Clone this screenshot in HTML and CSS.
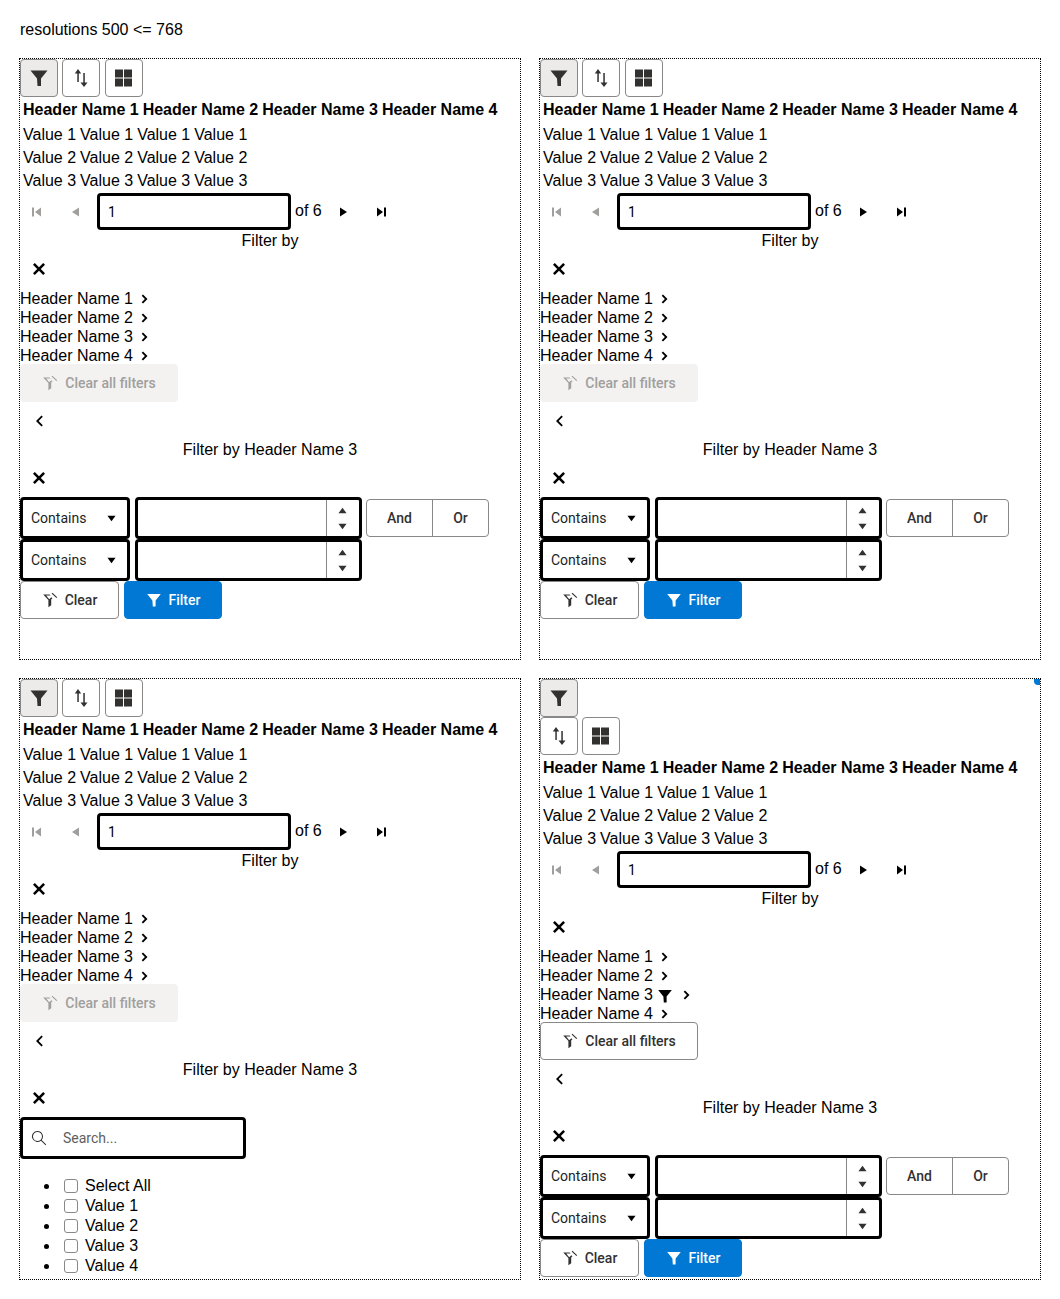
FILE: index.html
```html
<!DOCTYPE html>
<html lang="en">
<head>
    <meta charset="UTF-8">
    <meta name="viewport" content="width=device-width, initial-scale=1.0">
    <title>resolutions 500 &lt;= 768</title>
    <link rel="stylesheet" href="styles.css">
</head>
<body>
    <!-- shared icons -->
    <svg class="icon-defs" width="0" height="0">
        <symbol id="i-filter" viewBox="0 0 20 20"><path d="M1.500 2.500h17L12 10.500V18H8.500l-.5-7.500z"/></symbol>
        <symbol id="i-sort" viewBox="0 0 20 20"><path d="M7 1l3.200 4.500H7.800V14H6.300V5.500H3.800zM12.300 5h1.500v9.500h2.700L13 19l-3.500-4.500h2.800z"/></symbol>
        <symbol id="i-grid" viewBox="0 0 20 20"><path d="M1 1.500h8v8H1zM10 1.500h8v8h-8zM1 10.500h8v8H1zM10 10.500h8v8h-8z"/></symbol>
        <symbol id="i-clear" viewBox="0 0 20 20"><path d="M1.500 3h8l1.200 1.500H5.200L9 9l2.800-2.500L13 7.700 11.500 9.500v7L8 19v-9zM12 2l1-1 6 5.500-1 1z"/></symbol>
        <symbol id="i-close" viewBox="0 0 16 16"><path d="M3.800 2L8 6.200 12.200 2 14 3.800 9.800 8l4.200 4.200-1.800 1.800L8 9.800 3.800 14 2 12.200 6.200 8 2 3.800z"/></symbol>
        <symbol id="i-right" viewBox="0 0 16 16"><path d="M6 3.500l4.500 4.500L6 12.500l-1.300-1.300L7.900 8 4.700 4.800z"/></symbol>
        <symbol id="i-left" viewBox="0 0 16 16"><path d="M10.500 2.500L5 8l5.500 5.500 1.300-1.300L7.600 8l4.200-4.200z"/></symbol>
        <symbol id="i-first" viewBox="0 0 16 16"><path d="M3 3.500h2v9H3zM12 3.500v9L6 8z"/></symbol>
        <symbol id="i-prev" viewBox="0 0 16 16"><path d="M12 3.500v9L5 8z"/></symbol>
        <symbol id="i-next" viewBox="0 0 16 16"><path d="M5 3.500v9L12 8z"/></symbol>
        <symbol id="i-last" viewBox="0 0 16 16"><path d="M4 3.500v9L10 8zM11 3.500h2v9h-2z"/></symbol>
        <symbol id="i-up" viewBox="0 0 10 10"><path d="M5 2l4.500 6h-9z"/></symbol>
        <symbol id="i-down" viewBox="0 0 10 10"><path d="M.5 2h9L5 8z"/></symbol>
        <symbol id="i-search" viewBox="0 0 16 16"><path d="M6.500 1a5.500 5.500 0 0 1 4.200 9l4.500 4.500-.7.700-4.500-4.500A5.500 5.500 0 1 1 6.500 1zm0 1a4.500 4.500 0 1 0 0 9 4.500 4.500 0 0 0 0-9z"/></symbol>
    </svg>

    <p class="page-title">resolutions 500 &lt;= 768</p>

    <div class="panel-grid">

        <!-- panel 1 -->
        <div class="panel">
            <div class="toolbar">
                <button class="tool-btn pressed"><svg><use href="#i-filter"/></svg></button>
                <button class="tool-btn"><svg><use href="#i-sort"/></svg></button>
                <button class="tool-btn"><svg><use href="#i-grid"/></svg></button>
            </div>
            <div class="data-head"><span>Header Name 1</span> <span>Header Name 2</span> <span>Header Name 3</span> <span>Header Name 4</span></div>
            <div class="data-row"><span>Value 1</span> <span>Value 1</span> <span>Value 1</span> <span>Value 1</span></div>
            <div class="data-row"><span>Value 2</span> <span>Value 2</span> <span>Value 2</span> <span>Value 2</span></div>
            <div class="data-row"><span>Value 3</span> <span>Value 3</span> <span>Value 3</span> <span>Value 3</span></div>
            <div class="pager">
                <span class="page-btn disabled"><svg><use href="#i-first"/></svg></span>
                <span class="page-btn disabled"><svg><use href="#i-prev"/></svg></span>
                <input class="page-input" type="text" value="1">
                <span class="page-of">of 6</span>
                <span class="page-btn"><svg><use href="#i-next"/></svg></span>
                <span class="page-btn"><svg><use href="#i-last"/></svg></span>
            </div>
            <div class="menu-title">Filter by</div>
            <button class="plain-btn"><svg><use href="#i-close"/></svg></button>
            <ul class="header-list">
                <li>Header Name 1<svg class="chevron"><use href="#i-right"/></svg></li>
                <li>Header Name 2<svg class="chevron"><use href="#i-right"/></svg></li>
                <li>Header Name 3<svg class="chevron"><use href="#i-right"/></svg></li>
                <li>Header Name 4<svg class="chevron"><use href="#i-right"/></svg></li>
            </ul>
            <button class="btn btn-wide disabled"><svg><use href="#i-clear"/></svg>Clear all filters</button>
            <button class="plain-btn"><svg><use href="#i-left"/></svg></button>
            <div class="menu-title">Filter by Header Name 3</div>
            <button class="plain-btn"><svg><use href="#i-close"/></svg></button>
            <div class="filter-row">
                <div class="select-box">Contains<svg><use href="#i-down"/></svg></div>
                <div class="number-box">
                    <span class="number-fill"></span>
                    <span class="spin"><svg><use href="#i-up"/></svg><svg><use href="#i-down"/></svg></span>
                </div>
                <div class="logic-group"><button>And</button><button>Or</button></div>
            </div>
            <div class="filter-row">
                <div class="select-box">Contains<svg><use href="#i-down"/></svg></div>
                <div class="number-box">
                    <span class="number-fill"></span>
                    <span class="spin"><svg><use href="#i-up"/></svg><svg><use href="#i-down"/></svg></span>
                </div>
            </div>
            <div class="action-row">
                <button class="btn btn-clear"><svg><use href="#i-clear"/></svg>Clear</button>
                <button class="btn btn-primary"><svg><use href="#i-filter"/></svg>Filter</button>
            </div>
        </div>

        <!-- panel 2 -->
        <div class="panel">
            <div class="toolbar">
                <button class="tool-btn pressed"><svg><use href="#i-filter"/></svg></button>
                <button class="tool-btn"><svg><use href="#i-sort"/></svg></button>
                <button class="tool-btn"><svg><use href="#i-grid"/></svg></button>
            </div>
            <div class="data-head"><span>Header Name 1</span> <span>Header Name 2</span> <span>Header Name 3</span> <span>Header Name 4</span></div>
            <div class="data-row"><span>Value 1</span> <span>Value 1</span> <span>Value 1</span> <span>Value 1</span></div>
            <div class="data-row"><span>Value 2</span> <span>Value 2</span> <span>Value 2</span> <span>Value 2</span></div>
            <div class="data-row"><span>Value 3</span> <span>Value 3</span> <span>Value 3</span> <span>Value 3</span></div>
            <div class="pager">
                <span class="page-btn disabled"><svg><use href="#i-first"/></svg></span>
                <span class="page-btn disabled"><svg><use href="#i-prev"/></svg></span>
                <input class="page-input" type="text" value="1">
                <span class="page-of">of 6</span>
                <span class="page-btn"><svg><use href="#i-next"/></svg></span>
                <span class="page-btn"><svg><use href="#i-last"/></svg></span>
            </div>
            <div class="menu-title">Filter by</div>
            <button class="plain-btn"><svg><use href="#i-close"/></svg></button>
            <ul class="header-list">
                <li>Header Name 1<svg class="chevron"><use href="#i-right"/></svg></li>
                <li>Header Name 2<svg class="chevron"><use href="#i-right"/></svg></li>
                <li>Header Name 3<svg class="chevron"><use href="#i-right"/></svg></li>
                <li>Header Name 4<svg class="chevron"><use href="#i-right"/></svg></li>
            </ul>
            <button class="btn btn-wide disabled"><svg><use href="#i-clear"/></svg>Clear all filters</button>
            <button class="plain-btn"><svg><use href="#i-left"/></svg></button>
            <div class="menu-title">Filter by Header Name 3</div>
            <button class="plain-btn"><svg><use href="#i-close"/></svg></button>
            <div class="filter-row">
                <div class="select-box">Contains<svg><use href="#i-down"/></svg></div>
                <div class="number-box">
                    <span class="number-fill"></span>
                    <span class="spin"><svg><use href="#i-up"/></svg><svg><use href="#i-down"/></svg></span>
                </div>
                <div class="logic-group"><button>And</button><button>Or</button></div>
            </div>
            <div class="filter-row">
                <div class="select-box">Contains<svg><use href="#i-down"/></svg></div>
                <div class="number-box">
                    <span class="number-fill"></span>
                    <span class="spin"><svg><use href="#i-up"/></svg><svg><use href="#i-down"/></svg></span>
                </div>
            </div>
            <div class="action-row">
                <button class="btn btn-clear"><svg><use href="#i-clear"/></svg>Clear</button>
                <button class="btn btn-primary"><svg><use href="#i-filter"/></svg>Filter</button>
            </div>
        </div>

        <!-- panel 3: checkbox filter -->
        <div class="panel">
            <div class="toolbar">
                <button class="tool-btn pressed"><svg><use href="#i-filter"/></svg></button>
                <button class="tool-btn"><svg><use href="#i-sort"/></svg></button>
                <button class="tool-btn"><svg><use href="#i-grid"/></svg></button>
            </div>
            <div class="data-head"><span>Header Name 1</span> <span>Header Name 2</span> <span>Header Name 3</span> <span>Header Name 4</span></div>
            <div class="data-row"><span>Value 1</span> <span>Value 1</span> <span>Value 1</span> <span>Value 1</span></div>
            <div class="data-row"><span>Value 2</span> <span>Value 2</span> <span>Value 2</span> <span>Value 2</span></div>
            <div class="data-row"><span>Value 3</span> <span>Value 3</span> <span>Value 3</span> <span>Value 3</span></div>
            <div class="pager">
                <span class="page-btn disabled"><svg><use href="#i-first"/></svg></span>
                <span class="page-btn disabled"><svg><use href="#i-prev"/></svg></span>
                <input class="page-input" type="text" value="1">
                <span class="page-of">of 6</span>
                <span class="page-btn"><svg><use href="#i-next"/></svg></span>
                <span class="page-btn"><svg><use href="#i-last"/></svg></span>
            </div>
            <div class="menu-title">Filter by</div>
            <button class="plain-btn"><svg><use href="#i-close"/></svg></button>
            <ul class="header-list">
                <li>Header Name 1<svg class="chevron"><use href="#i-right"/></svg></li>
                <li>Header Name 2<svg class="chevron"><use href="#i-right"/></svg></li>
                <li>Header Name 3<svg class="chevron"><use href="#i-right"/></svg></li>
                <li>Header Name 4<svg class="chevron"><use href="#i-right"/></svg></li>
            </ul>
            <button class="btn btn-wide disabled"><svg><use href="#i-clear"/></svg>Clear all filters</button>
            <button class="plain-btn"><svg><use href="#i-left"/></svg></button>
            <div class="menu-title">Filter by Header Name 3</div>
            <button class="plain-btn"><svg><use href="#i-close"/></svg></button>
            <div class="search-box">
                <svg><use href="#i-search"/></svg>
                <span>Search...</span>
            </div>
            <ul class="check-list">
                <li><input type="checkbox">Select All</li>
                <li><input type="checkbox">Value 1</li>
                <li><input type="checkbox">Value 2</li>
                <li><input type="checkbox">Value 3</li>
                <li><input type="checkbox">Value 4</li>
            </ul>
        </div>

        <!-- panel 4: toolbar wraps, filter applied -->
        <div class="panel">
            <span class="corner-mark"></span>
            <div class="toolbar">
                <button class="tool-btn pressed"><svg><use href="#i-filter"/></svg></button><br>
                <button class="tool-btn"><svg><use href="#i-sort"/></svg></button>
                <button class="tool-btn"><svg><use href="#i-grid"/></svg></button>
            </div>
            <div class="data-head"><span>Header Name 1</span> <span>Header Name 2</span> <span>Header Name 3</span> <span>Header Name 4</span></div>
            <div class="data-row"><span>Value 1</span> <span>Value 1</span> <span>Value 1</span> <span>Value 1</span></div>
            <div class="data-row"><span>Value 2</span> <span>Value 2</span> <span>Value 2</span> <span>Value 2</span></div>
            <div class="data-row"><span>Value 3</span> <span>Value 3</span> <span>Value 3</span> <span>Value 3</span></div>
            <div class="pager">
                <span class="page-btn disabled"><svg><use href="#i-first"/></svg></span>
                <span class="page-btn disabled"><svg><use href="#i-prev"/></svg></span>
                <input class="page-input" type="text" value="1">
                <span class="page-of">of 6</span>
                <span class="page-btn"><svg><use href="#i-next"/></svg></span>
                <span class="page-btn"><svg><use href="#i-last"/></svg></span>
            </div>
            <div class="menu-title">Filter by</div>
            <button class="plain-btn"><svg><use href="#i-close"/></svg></button>
            <ul class="header-list">
                <li>Header Name 1<svg class="chevron"><use href="#i-right"/></svg></li>
                <li>Header Name 2<svg class="chevron"><use href="#i-right"/></svg></li>
                <li>Header Name 3<svg class="applied"><use href="#i-filter"/></svg><svg class="chevron"><use href="#i-right"/></svg></li>
                <li>Header Name 4<svg class="chevron"><use href="#i-right"/></svg></li>
            </ul>
            <button class="btn btn-wide"><svg><use href="#i-clear"/></svg>Clear all filters</button>
            <button class="plain-btn"><svg><use href="#i-left"/></svg></button>
            <div class="menu-title">Filter by Header Name 3</div>
            <button class="plain-btn"><svg><use href="#i-close"/></svg></button>
            <div class="filter-row">
                <div class="select-box">Contains<svg><use href="#i-down"/></svg></div>
                <div class="number-box">
                    <span class="number-fill"></span>
                    <span class="spin"><svg><use href="#i-up"/></svg><svg><use href="#i-down"/></svg></span>
                </div>
                <div class="logic-group"><button>And</button><button>Or</button></div>
            </div>
            <div class="filter-row">
                <div class="select-box">Contains<svg><use href="#i-down"/></svg></div>
                <div class="number-box">
                    <span class="number-fill"></span>
                    <span class="spin"><svg><use href="#i-up"/></svg><svg><use href="#i-down"/></svg></span>
                </div>
            </div>
            <div class="action-row">
                <button class="btn btn-clear"><svg><use href="#i-clear"/></svg>Clear</button>
                <button class="btn btn-primary"><svg><use href="#i-filter"/></svg>Filter</button>
            </div>
        </div>

    </div>
</body>
</html>
```

FILE: styles.css
```css
* {
    box-sizing: border-box;
}
body {
    margin: 0;
    padding: 20px 19px;
    font-family: "Liberation Sans", Arial, sans-serif;
    font-size: 16px;
    line-height: 19px;
    color: #000;
    background-color: #fff;
}
button {
    font-family: Roboto, sans-serif;
    padding: 0;
    background: none;
    cursor: pointer;
}
.icon-defs {
    position: absolute;
}
.page-title {
    margin: 0 0 19px 1px;
}
.panel-grid {
    display: grid;
    grid-template-columns: 502px 502px;
    grid-auto-rows: 602px;
    gap: 18px;
}
.panel {
    position: relative;
    border: 1px dotted #000;
    overflow: hidden;
}
.corner-mark {
    position: absolute;
    top: 0;
    right: 0;
    width: 6px;
    height: 6px;
    background-color: #0078d4;
    border-bottom-left-radius: 4px;
}

/* toolbar */
.toolbar {
    font-size: 16px;
    line-height: 0;
}
.tool-btn {
    width: 38px;
    height: 38px;
    border: 1px solid #8a8886;
    border-radius: 4px;
    background-color: #fff;
    vertical-align: top;
    display: inline-flex;
    align-items: center;
    justify-content: center;
}
.tool-btn svg {
    width: 20px;
    height: 20px;
    fill: #323130;
}
.tool-btn.pressed {
    background-color: #edebe9;
}

/* data rows */
.data-head,
.data-row {
    display: flex;
    gap: 4px;
}
.data-head {
    padding: 3px 3px 5px;
    font-weight: bold;
}
.data-row {
    padding: 1px 3px 3px;
}

/* pager */
.pager {
    display: flex;
    align-items: center;
    height: 38px;
    padding-bottom: 1px;
}
.page-btn {
    width: 34px;
    height: 34px;
    margin-right: 4px;
    display: flex;
    align-items: center;
    justify-content: center;
}
.page-btn svg {
    width: 16px;
    height: 16px;
    fill: #000;
}
.page-btn.disabled svg {
    fill: #a19f9d;
}
.page-input {
    width: 194px;
    height: 37px;
    margin-left: 1px;
    padding: 0 8px;
    border: 3px solid #000;
    border-radius: 4px;
    font-family: Roboto, sans-serif;
    font-size: 14px;
    outline: none;
}
.page-of {
    margin: 0 4px;
    padding-bottom: 2px;
}
.menu-title {
    text-align: center;
    height: 19px;
    padding-top: 1px;
    line-height: 18px;
}
.plain-btn {
    display: flex;
    align-items: center;
    justify-content: center;
    width: 38px;
    height: 38px;
    border: none;
}
.plain-btn svg {
    width: 16px;
    height: 16px;
    fill: #000;
}

/* header list */
.header-list {
    list-style: none;
    margin: 0;
    padding: 1px 0 0;
    height: 76px;
}
.header-list li {
    height: 19px;
    line-height: 19px;
    display: flex;
    align-items: center;
}
.chevron {
    width: 16px;
    height: 16px;
    margin-left: 4px;
    margin-top: 1px;
    fill: #000;
}
.applied {
    width: 16px;
    height: 16px;
    margin-left: 4px;
    margin-top: 2px;
    fill: #000;
}
.applied + .chevron {
    margin-left: 6px;
}

/* buttons */
.btn {
    height: 38px;
    display: inline-flex;
    align-items: center;
    justify-content: center;
    border: 1px solid #8a8886;
    border-radius: 4px;
    background-color: #fff;
    color: #323130;
    font-size: 14px;
    font-weight: 500;
}
.btn svg {
    width: 16px;
    height: 16px;
    margin-right: 7px;
    fill: #323130;
}
.btn-wide {
    display: flex;
    width: 158px;
}
.btn.disabled {
    border-color: #f3f2f1;
    background-color: #f3f2f1;
    color: #a19f9d;
}
.btn.disabled svg {
    fill: #a19f9d;
}
.btn-clear {
    width: 99px;
}
.btn-primary {
    width: 98px;
    margin-left: 5px;
    border-color: #0078d4;
    background-color: #0078d4;
    color: #fff;
}
.btn-primary svg {
    fill: #fff;
}
.action-row {
    display: flex;
}

/* filter rows */
.filter-row {
    display: flex;
    align-items: center;
    height: 42px;
}
.select-box {
    width: 110px;
    height: 42px;
    padding: 0 11px 0 8px;
    border: 3px solid #000;
    border-radius: 4px;
    display: flex;
    align-items: center;
    justify-content: space-between;
    font-family: Roboto, sans-serif;
    font-size: 14px;
    color: #201f1e;
}
.select-box svg {
    width: 9px;
    height: 9px;
    fill: #000;
}
.number-box {
    width: 227px;
    height: 42px;
    margin-left: 5px;
    border: 3px solid #000;
    border-radius: 4px;
    display: flex;
}
.number-fill {
    flex: 1;
}
.spin {
    width: 33px;
    padding-right: 1px;
    border-left: 1px solid #8a8886;
    display: flex;
    flex-direction: column;
    align-items: center;
    justify-content: center;
    gap: 7px;
}
.spin svg {
    width: 9px;
    height: 9px;
    fill: #323130;
}
.logic-group {
    width: 123px;
    height: 38px;
    margin-left: 4px;
    border: 1px solid #8a8886;
    border-radius: 4px;
    display: flex;
}
.logic-group button {
    border: none;
    font-size: 14px;
    font-weight: 500;
    color: #323130;
}
.logic-group button:first-child {
    width: 66px;
    border-right: 1px solid #8a8886;
}
.logic-group button:last-child {
    flex: 1;
}

/* checkbox filter */
.search-box {
    width: 226px;
    height: 42px;
    padding: 0 8px;
    border: 3px solid #000;
    border-radius: 4px;
    display: flex;
    align-items: center;
    font-family: Roboto, sans-serif;
    font-size: 14px;
    color: #605e5c;
}
.search-box svg {
    width: 16px;
    height: 16px;
    margin-right: 16px;
    fill: #323130;
}
.check-list {
    margin: 17px 0 16px;
    padding-left: 40px;
}
.check-list li {
    height: 20px;
    line-height: 20px;
}
.check-list input {
    appearance: none;
    width: 14px;
    height: 14px;
    margin: 0 7px 0 4px;
    border: 1px solid #8a8886;
    border-radius: 3px;
    vertical-align: -2px;
}
```
